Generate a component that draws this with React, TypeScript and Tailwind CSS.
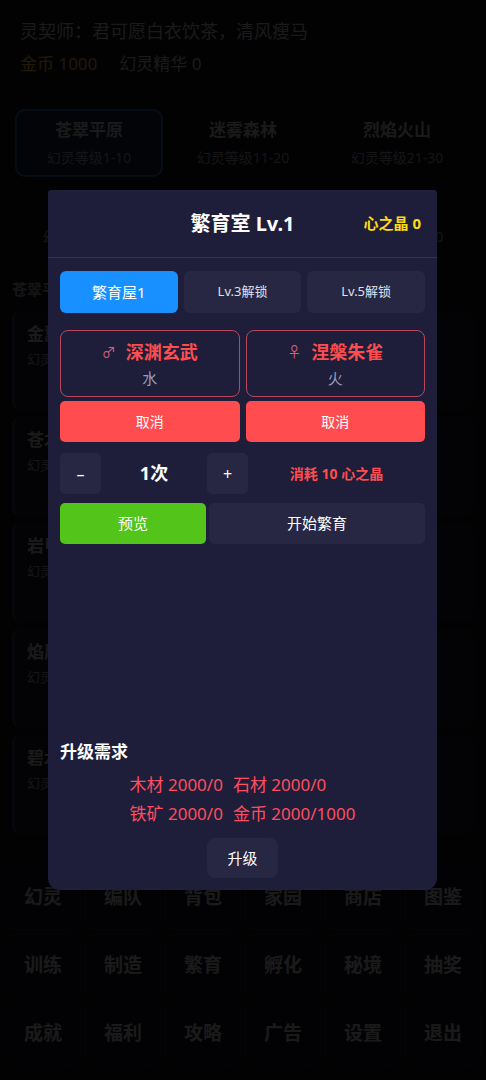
import React from 'react';

const font = { fontFamily: '"Noto Sans", "Noto Sans CJK SC", sans-serif' };

const zones = [
  { name: '苍翠平原', range: '幻灵等级1-10', active: true },
  { name: '迷雾森林', range: '幻灵等级11-20' },
  { name: '烈焰火山', range: '幻灵等级21-30' },
  { name: '冰霜雪原', range: '幻灵等级31-40' },
  { name: '幽暗深渊', range: '幻灵等级41-50' },
  { name: '天空之城', range: '幻灵等级51-60' },
];

const spirits = [
  { name: '金翼灵狐', info: '幻灵等级 1-5' },
  { name: '苍木灵鹿', info: '幻灵等级 3-7' },
  { name: '岩甲灵龟', info: '幻灵等级 4-8' },
  { name: '焰尾灵猫', info: '幻灵等级 6-9' },
  { name: '碧水灵蛇', info: '幻灵等级 8-10' },
];

const menu = ['幻灵', '编队', '背包', '家园', '商店', '图鉴', '训练', '制造', '繁育', '孵化', '秘境', '抽奖', '成就', '福利', '攻略', '广告', '设置', '退出'];

const Background: React.FC = () => (
  <div className="flex flex-col h-full bg-[#12121f] text-[#d0d0d0]">
    <div className="px-5 pt-[18px]">
      <p className="text-[18px] leading-[26px]">灵契师：君可愿白衣饮茶，清风瘦马</p>
      <div className="flex gap-[22px] mt-[7px] text-[17px] leading-[26px]">
        <span className="text-[#ffc53d]">金币 1000</span>
        <span>幻灵精华 0</span>
      </div>
    </div>
    <div className="grid grid-cols-3 gap-x-[6px] gap-y-[11px] px-[15px] mt-[32px]">
      {zones.map((z) => (
        <div
          key={z.name}
          className={`h-[68px] rounded-[10px] flex flex-col items-center justify-center border-2 ${z.active ? 'border-[#3a6ea8] bg-[#1d2038]' : 'border-transparent'}`}
        >
          <span className="text-[17px] font-bold leading-[22px]">{z.name}</span>
          <span className="text-[14px] leading-[18px] mt-[8px] text-[#a8a8b8]">{z.range}</span>
        </div>
      ))}
    </div>
    <p className="px-3 mt-[22px] text-[15px] font-bold text-[#a8a8b8]">苍翠平原</p>
    <div className="flex flex-col gap-[7px] px-3 mt-[10px]">
      {spirits.map((s) => (
        <div key={s.name} className="h-[99px] rounded-[8px] border-l-[3px] border-[#3a3a58] bg-[#1a1a30] px-[12px] pt-[10px]">
          <p className="text-[17px] font-bold leading-[26px]">{s.name}</p>
          <p className="text-[13px] leading-[20px] mt-[2px] text-[#a8a8b8]">{s.info}</p>
        </div>
      ))}
    </div>
    <div className="grid grid-cols-6 gap-[4px] px-[5px] mt-[32px]">
      {menu.map((m) => (
        <div key={m} className="h-[64px] rounded-[10px] border border-[#26263c] bg-[#17172a] flex items-center justify-center">
          <span className="text-[19px] font-bold">{m}</span>
        </div>
      ))}
    </div>
  </div>
);

const BreedModal: React.FC = () => (
  <div className="absolute left-[48px] top-[190px] w-[389px] h-[700px] bg-[#1e1e3a] rounded-b-[12px] rounded-t-[3px] flex flex-col text-white">
    <div className="grid grid-cols-[1fr_auto_1fr] items-center h-[68px] border-b border-[#34344f]">
      <div />
      <span className="text-[20px] font-bold">繁育室 Lv.1</span>
      <span className="justify-self-end pr-[16px] text-[15px] font-bold text-[#fadb14]">心之晶 0</span>
    </div>

    <div className="px-3 flex flex-col">
      <div className="grid grid-cols-3 gap-[6px] mt-[13px]">
        <button className="h-[42px] rounded-[6px] bg-[#1890ff] text-[15px]">繁育屋1</button>
        <button className="h-[42px] rounded-[6px] bg-[#272743] text-[13px] text-[#e0e0ea]">Lv.3解锁</button>
        <button className="h-[42px] rounded-[6px] bg-[#272743] text-[13px] text-[#e0e0ea]">Lv.5解锁</button>
      </div>

      <div className="grid grid-cols-2 gap-[6px] mt-[17px]">
        {[
          { sym: '♂', name: '深渊玄武', el: '水' },
          { sym: '♀', name: '涅槃朱雀', el: '火' },
        ].map((p) => (
          <div key={p.name} className="flex flex-col gap-[4px]">
            <div className="h-[67px] rounded-[8px] border border-[#b9475c] flex flex-col items-center justify-center">
              <div className="flex items-center gap-[10px]">
                <span className="text-[14px] text-[#d4607a] font-['Noto_Sans_CJK_SC',sans-serif]">{p.sym}</span>
                <span className="text-[18px] font-bold text-[#ff4d4f] leading-[24px]">{p.name}</span>
              </div>
              <span className="text-[15px] text-[#9a9ab4] mt-[4px] leading-[20px]">{p.el}</span>
            </div>
            <button className="h-[41px] rounded-[5px] bg-[#ff4d4f] text-[14px]">取消</button>
          </div>
        ))}
      </div>

      <div className="flex items-center h-[41px] mt-[11px]">
        <button className="w-[41px] h-[41px] rounded-[5px] bg-[#272743] text-[16px]">–</button>
        <span className="w-[106px] text-center text-[18px] font-bold">1次</span>
        <button className="w-[41px] h-[41px] rounded-[5px] bg-[#272743] text-[16px]">+</button>
        <span className="flex-1 text-center text-[14px] font-bold text-[#ff4d4f]">消耗 10 心之晶</span>
      </div>

      <div className="flex gap-[3px] mt-[9px]">
        <button className="w-[146px] h-[41px] rounded-[5px] bg-[#52c41a] text-[15px]">预览</button>
        <button className="flex-1 h-[41px] rounded-[5px] bg-[#272743] text-[15px]">开始繁育</button>
      </div>
    </div>

    <div className="mt-auto px-3 pb-3 flex flex-col">
      <p className="text-[17px] font-bold leading-[24px]">升级需求</p>
      <div className="self-center grid grid-cols-[auto_auto] gap-x-[10px] mt-[6px] text-[17px] leading-[29px] text-[#ff4d5f]">
        <span>木材 2000/0</span>
        <span>石材 2000/0</span>
        <span>铁矿 2000/0</span>
        <span>金币 2000/1000</span>
      </div>
      <button className="self-center mt-[10px] w-[71px] h-[40px] rounded-[8px] bg-[#272743] text-[15px]">升级</button>
    </div>
  </div>
);

export default function App() {
  return (
    <div className="relative w-[486px] h-[1080px] overflow-hidden bg-black" style={font}>
      <Background />
      <div className="absolute inset-0 bg-black/[0.88]" />
      <BreedModal />
    </div>
  );
}
